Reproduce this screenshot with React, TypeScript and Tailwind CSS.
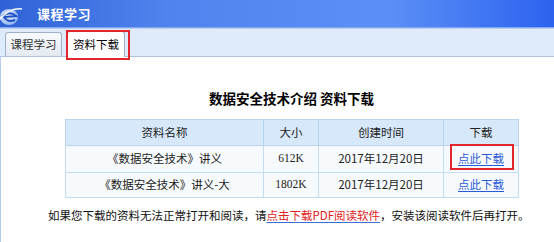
import React from "react";

const sans = { fontFamily: '"Noto Sans CJK SC", "Noto Sans", sans-serif' };

function Logo() {
  return (
    <svg width="24" height="26" viewBox="0 0 24 26" className="shrink-0">
      <defs>
        <radialGradient id="g1" cx="40%" cy="40%" r="60%">
          <stop offset="0%" stopColor="#ffffff" />
          <stop offset="100%" stopColor="#9fc0f5" />
        </radialGradient>
      </defs>
      <ellipse cx="9" cy="16" rx="9" ry="8" fill="url(#g1)" opacity="0.9" />
      <path d="M2 16 Q9 9 16 15 L4 16 Q8 22 15 19" stroke="#1b4fc4" strokeWidth="2" fill="none" />
      <path d="M-2 20 Q10 6 22 8" stroke="#f0f6ff" strokeWidth="1.6" fill="none" />
    </svg>
  );
}

export default function App() {
  return (
    <div className="w-[554px] h-[242px] bg-white overflow-hidden" style={sans}>
      {/* header */}
      <div className="h-[28px] flex items-center gap-[13px] pl-0 bg-[linear-gradient(90deg,#2f62d6_0%,#4f84ee_30%,#5b90f6_70%,#2d62f0_100%)] border-b border-[#7fa6ef]">
        <Logo />
        <span className="text-white font-bold text-[13px] tracking-[0.5px]">课程学习</span>
      </div>
      {/* tabs */}
      <div className="h-[29px] bg-[#dfeafb] border-t border-[#b9cff0] border-b border-b-[#b0c2dc] flex items-end pl-[5px] gap-[5px]">
        <div className="h-[24px] w-[57px] flex items-center justify-center text-[11.5px] text-[#333] bg-[linear-gradient(#f7f9fc,#e4eaf2)] border border-[#9fb1c8] border-b-0 rounded-t-[3px]">
          课程学习
        </div>
        <div className="relative h-[26px] w-[58px] -mb-px flex items-center justify-center text-[11.5px] text-black bg-white border border-[#9fb1c8] border-b-0 rounded-t-[3px]">
          资料下载
          <div className="absolute left-[-2px] top-[-2px] w-[64px] h-[30px] border-2 border-[#e3262b]" />
        </div>
      </div>
      {/* content */}
      <div className="border-l border-[#b8cdee] h-[185px]">
        <div className="ml-[64px] w-[453px] pt-[31px]">
          <div className="text-center font-bold text-[13.5px] text-black h-[20px] leading-[20px]">
            数据安全技术介绍 资料下载
          </div>
          <table className="mt-[11px] w-[453px] border-collapse text-[11.5px] text-[#222] table-fixed">
            <colgroup>
              <col className="w-[198px]" />
              <col className="w-[55px]" />
              <col className="w-[125px]" />
              <col className="w-[75px]" />
            </colgroup>
            <thead>
              <tr className="h-[26px] bg-[#d7e8fa]">
                <th className="font-normal border border-[#b7d3ee]">资料名称</th>
                <th className="font-normal border border-[#b7d3ee]">大小</th>
                <th className="font-normal border border-[#b7d3ee]">创建时间</th>
                <th className="font-normal border border-[#b7d3ee]">下载</th>
              </tr>
            </thead>
            <tbody>
              <tr className="h-[27px] bg-[#f7fafd]">
                <td className="text-center border border-[#c4dcf1]">《数据安全技术》讲义</td>
                <td className="text-center border border-[#c4dcf1]" style={{ fontFamily: '"Liberation Serif", serif' }}>612K</td>
                <td className="text-center border border-[#c4dcf1]">2017年12月20日</td>
                <td className="text-center border border-[#c4dcf1]">
                  <span className="relative inline-block">
                    <span className="text-[#2a5bd7] underline underline-offset-2">点此下载</span>
                    <span className="absolute left-[-8px] top-[-6px] w-[64px] h-[26px] border-2 border-[#e3262b]" />
                  </span>
                </td>
              </tr>
              <tr className="h-[25px] bg-[#f7fafd]">
                <td className="text-center border border-[#c4dcf1]">《数据安全技术》讲义-大</td>
                <td className="text-center border border-[#c4dcf1]" style={{ fontFamily: '"Liberation Serif", serif' }}>1802K</td>
                <td className="text-center border border-[#c4dcf1]">2017年12月20日</td>
                <td className="text-center border border-[#c4dcf1]">
                  <span className="text-[#2a5bd7] underline underline-offset-2">点此下载</span>
                </td>
              </tr>
            </tbody>
          </table>
        </div>
        <div className="pl-[47px] mt-[9px] text-[11.5px] text-[#111] whitespace-nowrap">
          如果您下载的资料无法正常打开和阅读，请<span className="text-[#e0201c] underline underline-offset-2 decoration-[#3b6fd8]">点击下载PDF阅读软件</span>，安装该阅读软件后再打开。
        </div>
      </div>
    </div>
  );
}
